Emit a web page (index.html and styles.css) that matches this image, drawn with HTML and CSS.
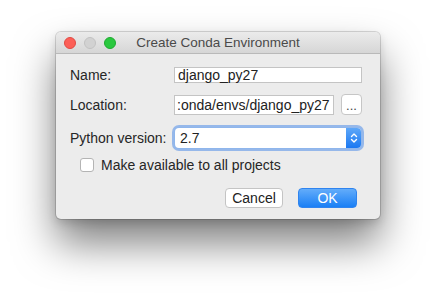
FILE: index.html
```html
<!DOCTYPE html>
<html lang="en">
<head>
    <meta charset="UTF-8">
    <meta name="viewport" content="width=device-width, initial-scale=1.0">
    <title>Create Conda Environment</title>
    <link rel="stylesheet" href="styles.css">
</head>
<body>
    <div class="desk">
        <div class="window">
            <div class="titlebar">
                <div class="lights">
                    <span class="light close"></span>
                    <span class="light minimize"></span>
                    <span class="light zoom"></span>
                </div>
                <div class="title">Create Conda Environment</div>
                <div></div>
            </div>

            <div class="content">
                <div class="row row-name">
                    <label class="label">Name:</label>
                    <div class="field">django_py27</div>
                </div>
                <div class="row row-location">
                    <label class="label">Location:</label>
                    <div class="field path">:onda/envs/django_py27</div>
                    <button class="browse">...</button>
                </div>
                <div class="row row-version">
                    <label class="label">Python version:</label>
                    <div class="select">
                        <span class="select-value">2.7</span>
                        <span class="stepper">
                            <svg width="8" height="12" viewBox="0 0 8 12">
                                <path d="M1.5 4.5 L4 2 L6.5 4.5 M1.5 7.5 L4 10 L6.5 7.5" fill="none" stroke="#fff" stroke-width="1.4" stroke-linecap="round" stroke-linejoin="round"/>
                            </svg>
                        </span>
                    </div>
                </div>
                <label class="check">
                    <span class="box"></span>
                    Make available to all projects
                </label>
                <div class="actions">
                    <button class="btn">Cancel</button>
                    <button class="btn primary">OK</button>
                </div>
            </div>
        </div>
    </div>
</body>
</html>
```

FILE: styles.css
```css
body { margin: 0; background: #fff; font-family: "Liberation Sans", Arial, sans-serif; color: #222; }
.desk { padding: 32px 0 0 56px; height: 298px; box-sizing: border-box; }

.window {
    width: 324px;
    background: #ececec;
    border-radius: 5px;
    box-shadow: 0 0 0 1px rgba(0,0,0,0.14), 0 24px 42px rgba(0,0,0,0.5), 0 4px 10px rgba(0,0,0,0.14);
    overflow: hidden;
}

.titlebar {
    height: 21px;
    display: grid;
    grid-template-columns: 1fr auto 1fr;
    align-items: center;
    background: linear-gradient(#ebebeb, #d6d6d6);
    border-bottom: 1px solid #b9b9b9;
}
.lights { display: flex; gap: 8px; padding-left: 8px; }
.light { width: 12px; height: 12px; border-radius: 50%; box-sizing: border-box; }
.light.close { background: #fc5f57; border: 1px solid #e04a43; }
.light.minimize { background: #d2d2d2; border: 1px solid #c2c2c2; }
.light.zoom { background: #2ac83f; border: 1px solid #1eaa30; }
.title { font-size: 13.5px; color: #4a4a4a; }

.content { padding: 13px 18px 11px 14px; display: flex; flex-direction: column; }
.row { display: flex; align-items: center; }
.row-location { margin-top: 11px; }
.row-version { margin-top: 13px; }
.label { width: 104px; font-size: 14px; color: #262626; flex-shrink: 0; }

.field {
    flex: 1;
    height: 16px;
    background: #fff;
    border: 1px solid #c4c4c4;
    box-sizing: border-box;
    font-size: 14px;
    line-height: 14px;
    padding-left: 3px;
    white-space: nowrap;
}
.row-location .field { height: 20px; line-height: 18px; padding-left: 2px; }

.browse {
    width: 21px;
    height: 21px;
    margin-left: 7px;
    padding: 2px 0 0;
    background: #fff;
    border: 1px solid #c6c6c6;
    border-radius: 4px;
    font-family: inherit;
    font-size: 13px;
    color: #444;
    line-height: 1;
}

.select {
    flex: 1;
    height: 20px;
    margin: 0 1px;
    display: flex;
    align-items: center;
    background: #fff;
    border-radius: 4px;
    box-shadow: 0 0 0 1px #8fb6ec, 0 0 0 3px rgba(122,167,234,0.75);
    overflow: hidden;
}
.select-value { flex: 1; font-size: 14px; padding-left: 5px; }
.stepper {
    width: 15px;
    height: 20px;
    display: flex;
    align-items: center;
    justify-content: center;
    background: linear-gradient(#5ea7f8, #1a78f2);
}

.check { margin: 10px 0 0 10px; display: flex; align-items: center; gap: 7px; font-size: 14px; color: #262626; height: 14px; }
.box { width: 14px; height: 14px; box-sizing: border-box; background: #fff; border: 1px solid #b4b4b4; border-radius: 3px; }

.actions { margin: 16px 5px 0 0; display: flex; justify-content: flex-end; gap: 15px; }
.btn {
    width: 58px;
    height: 20px;
    padding: 0;
    background: #fff;
    border: 1px solid #c4c4c4;
    border-radius: 4px;
    font-family: inherit;
    font-size: 14px;
    color: #222;
}
.btn.primary {
    width: 59px;
    border: 1px solid #2f84ef;
    background: linear-gradient(#63acfa, #1a7ff5);
    color: #fff;
}
```
